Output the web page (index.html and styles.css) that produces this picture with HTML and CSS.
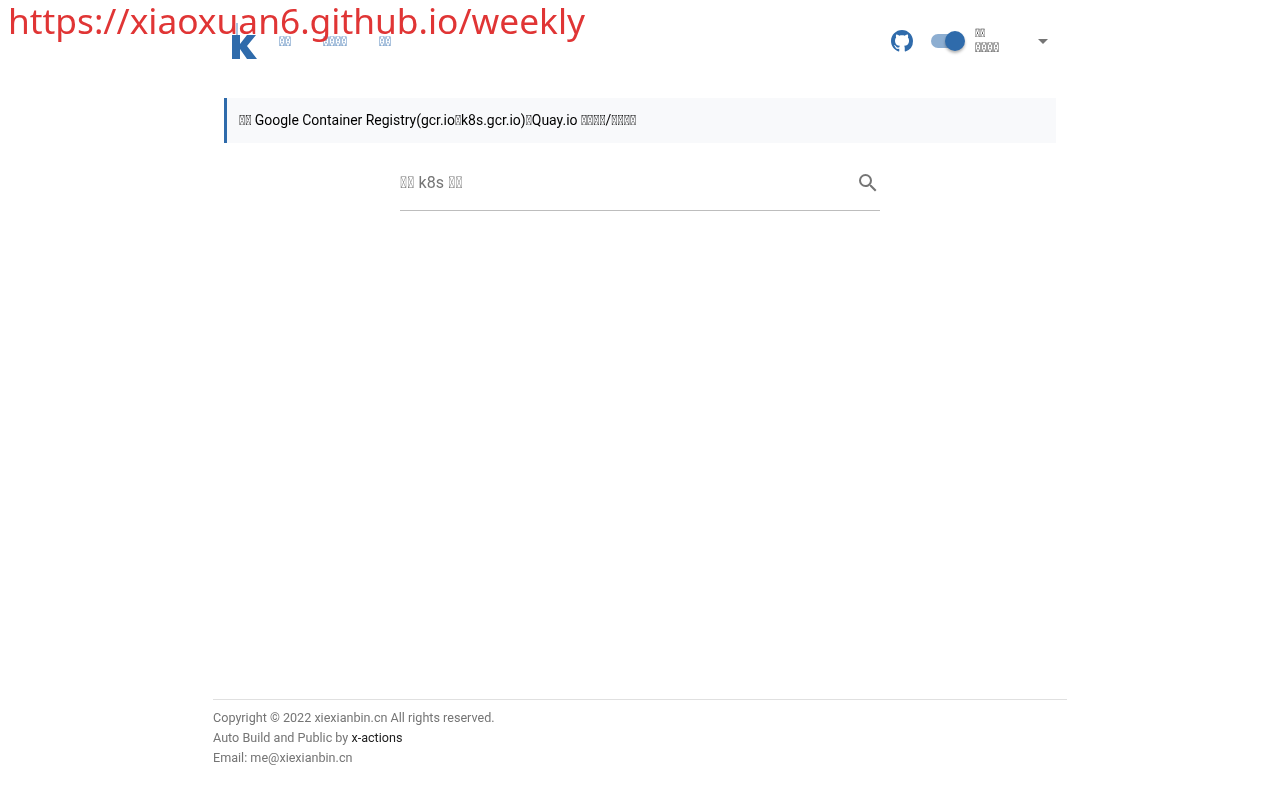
FILE: index.html
```html
<!DOCTYPE html>
<html lang="zh-CN">
<head>
<meta charset="utf-8">
<title>k8s</title>
<link rel="stylesheet" href="styles.css">
</head>
<body>
<a class="banner" href="#">https://xiaoxuan6.github.io/weekly</a>
<div class="page">
  <header class="topbar">
    <svg class="logo" viewBox="0 0 26 36" width="26" height="36"><path fill="#a9c5e2" d="M4 0h2v12H4z"/><path fill="#2f6bab" d="M0 12h8v9l7-9h9l-9 11 10 13H15l-7-10v10H0z"/></svg>
    <nav class="nav">
      <a class="nav-link" href="#">&#xE000;&#xE000;</a>
      <a class="nav-link" href="#">&#xE000;&#xE000;&#xE000;&#xE000;</a>
      <a class="nav-link" href="#">&#xE000;&#xE000;</a>
    </nav>
    <div class="spacer"></div>
    <svg class="github" viewBox="0 0 16 16" width="22" height="22"><path fill="#2f6bab" d="M8 0C3.58 0 0 3.58 0 8c0 3.54 2.29 6.53 5.47 7.59.4.07.55-.17.55-.38 0-.19-.01-.82-.01-1.49-2.01.37-2.53-.49-2.69-.94-.09-.23-.48-.94-.82-1.13-.28-.15-.68-.52-.01-.53.63-.01 1.08.58 1.23.82.72 1.21 1.87.87 2.33.66.07-.52.28-.87.51-1.07-1.78-.2-3.64-.89-3.64-3.95 0-.87.31-1.59.82-2.15-.08-.2-.36-1.02.08-2.12 0 0 .67-.21 2.2.82.64-.18 1.32-.27 2-.27s1.36.09 2 .27c1.53-1.04 2.2-.82 2.2-.82.44 1.1.16 1.92.08 2.12.51.56.82 1.27.82 2.15 0 3.07-1.87 3.75-3.65 3.95.29.25.54.73.54 1.48 0 1.07-.01 1.93-.01 2.2 0 .21.15.46.55.38A8.01 8.01 0 0 0 16 8c0-4.42-3.58-8-8-8z"/></svg>
    <div class="switch"><span class="track"></span><span class="thumb"></span></div>
    <div class="select">
      <div class="select-label">&#xE000;&#xE000;</div>
      <div class="select-value">&#xE000;&#xE000;&#xE000;&#xE000;</div>
    </div>
    <span class="caret"></span>
  </header>
  <div class="notice">&#xE000;&#xE000; Google Container Registry(gcr.io&#xE000;k8s.gcr.io)&#xE000;Quay.io &#xE000;&#xE000;&#xE000;&#xE000;/&#xE000;&#xE000;&#xE000;&#xE000;</div>
  <div class="search">
    <span class="placeholder">&#xE000;&#xE000; k8s &#xE000;&#xE000;</span>
    <svg class="search-icon" viewBox="0 0 24 24" width="24" height="24"><path fill="#757575" d="M15.5 14h-.79l-.28-.27A6.47 6.47 0 0 0 16 9.5 6.5 6.5 0 1 0 9.5 16c1.61 0 3.09-.59 4.23-1.57l.27.28v.79l5 4.99L20.49 19l-4.99-5zm-6 0C7.01 14 5 11.99 5 9.5S7.01 5 9.5 5 14 7.01 14 9.5 11.99 14 9.500 14z"/></svg>
  </div>
</div>
<footer class="footer">
  <div class="footer-line">Copyright © 2022 xiexianbin.cn All rights reserved.</div>
  <div class="footer-line">Auto Build and Public by <a class="footer-link" href="#">x-actions</a></div>
  <div class="footer-line">Email: me@xiexianbin.cn</div>
</footer>
</body>
</html>
```
FILE: styles.css
```css
* { box-sizing: border-box; }
html, body { margin: 0; height: 800px; background: #fff; overflow: hidden; }
body { position: relative; font-family: Roboto, sans-serif; color: #000; }
a { text-decoration: none; }
.banner {
  position: absolute; left: 8px; top: 0; z-index: 2; will-change: transform;
  font-family: "Noto Sans", sans-serif; font-size: 35.3px; line-height: 40px; color: #e03535;
}
.page { width: 832px; margin: 0 auto; height: 699px; will-change: transform; }
.topbar { height: 82px; display: flex; align-items: center; padding: 0 7px 0 8px; }
.nav { display: flex; gap: 32px; margin-left: 21px; }
.nav-link { font-size: 13.5px; line-height: 16px; color: #1f5fa6; }
.spacer { flex: 1; }
.github { margin-right: 18px; }
.switch { position: relative; width: 34px; height: 24px; margin-right: 10px; }
.track { position: absolute; left: 0; top: 5px; width: 32px; height: 14px; border-radius: 7px; background: #2f6bab; opacity: .55; }
.thumb { position: absolute; left: 14px; top: 2px; width: 20px; height: 20px; border-radius: 50%; background: #2f6bab; box-shadow: 0 2px 3px rgba(0,0,0,.3); }
.select { width: 63px; }
.select-label { font-size: 11.5px; color: #222; line-height: 12px; margin-top: -1px; }
.select-value { font-size: 13.5px; color: #000; line-height: 16px; }
.caret { width: 0; height: 0; border: 5px solid transparent; border-top-color: #757575; border-bottom: 0; margin-right: 1px; }
.notice { margin-top: 16px; height: 45px; background: #f8f9fb; border-left: 3px solid #2f6bab; padding: 0 12px; font-size: 14px; line-height: 45px; letter-spacing: -.03px; }
.search { width: 480px; height: 68px; margin: 0 auto; border-bottom: 1px solid #bdbdbd; display: flex; align-items: center; justify-content: space-between; padding-top: 12px; }
.placeholder { font-size: 16px; color: #757575; letter-spacing: .1px; }
.footer { width: 854px; margin: 0 auto; border-top: 1px solid #e0e0e0; padding-top: 8px; font-size: 12.6px; line-height: 20px; color: #757575; will-change: transform; }
.footer-link { color: #212121; }
```
